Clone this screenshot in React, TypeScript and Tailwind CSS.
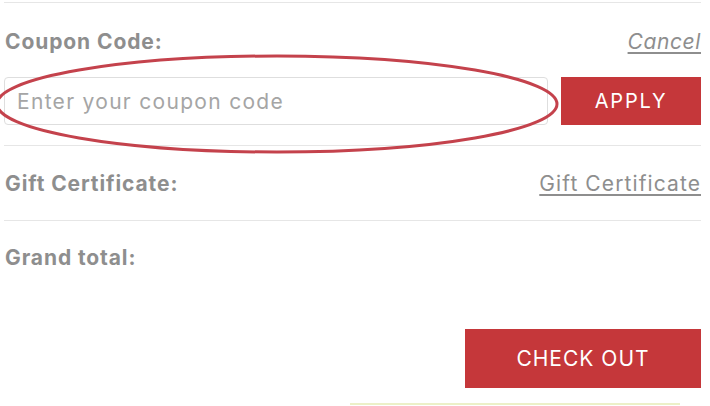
import React from 'react'

function Divider() {
  return <div className="border-t border-[#e6e6e6]" />
}

export default function App() {
  return (
    <div className="relative w-[710px] h-[406px] overflow-hidden bg-white font-['Inter',sans-serif] text-[#8e8e8e]">
      <div className="ml-[4px] w-[697px] pt-[2px]">
        <Divider />

        {/* coupon */}
        <div className="flex items-end justify-between h-[51px] pb-[2px]">
          <span className="text-[21px] font-bold leading-none tracking-[0.9px] pl-[1px]">Coupon Code:</span>
          <a className="text-[21px] italic underline underline-offset-[3px] leading-none tracking-[0.6px]">Cancel</a>
        </div>
        <div className="flex items-center gap-[13px] mt-[23px]">
          <input
            className="h-[48px] w-[544px] rounded-[4px] border border-[#dedede] px-[12px] text-[21px] tracking-[1.3px] placeholder:text-[#a5a5a5] outline-none"
            placeholder="Enter your coupon code"
          />
          <button className="h-[48px] w-[140px] bg-[#c5373a] text-white text-[20px] tracking-[1.8px]">APPLY</button>
        </div>
        <div className="mt-[20px]">
          <Divider />
        </div>

        {/* gift */}
        <div className="flex items-end justify-between h-[48px]">
          <span className="text-[21px] font-bold leading-none tracking-[0.9px] pl-[1px]">Gift Certificate:</span>
          <a className="text-[21px] underline underline-offset-[3px] leading-none tracking-[1.1px]">Gift Certificate</a>
        </div>
        <div className="mt-[26px]">
          <Divider />
        </div>

        {/* total */}
        <div className="flex items-end h-[47px]">
          <span className="text-[21px] font-bold leading-none tracking-[0.9px] pl-[1px]">Grand total:</span>
        </div>

        <div className="flex justify-end mt-[61px]">
          <button className="h-[59px] w-[236px] bg-[#c5373a] text-white text-[21px] tracking-[1px]">CHECK OUT</button>
        </div>
        <div className="ml-[346px] mt-[15px] w-[330px] border-t-2 border-[#ecf0c8]" />
      </div>

      {/* hand-drawn annotation */}
      <svg className="absolute left-[-6px] top-[53px] pointer-events-none" width="566" height="102" viewBox="0 0 566 102">
        <ellipse cx="283" cy="51" rx="280" ry="48" fill="none" stroke="#c4424c" strokeWidth="3" />
      </svg>
    </div>
  )
}
